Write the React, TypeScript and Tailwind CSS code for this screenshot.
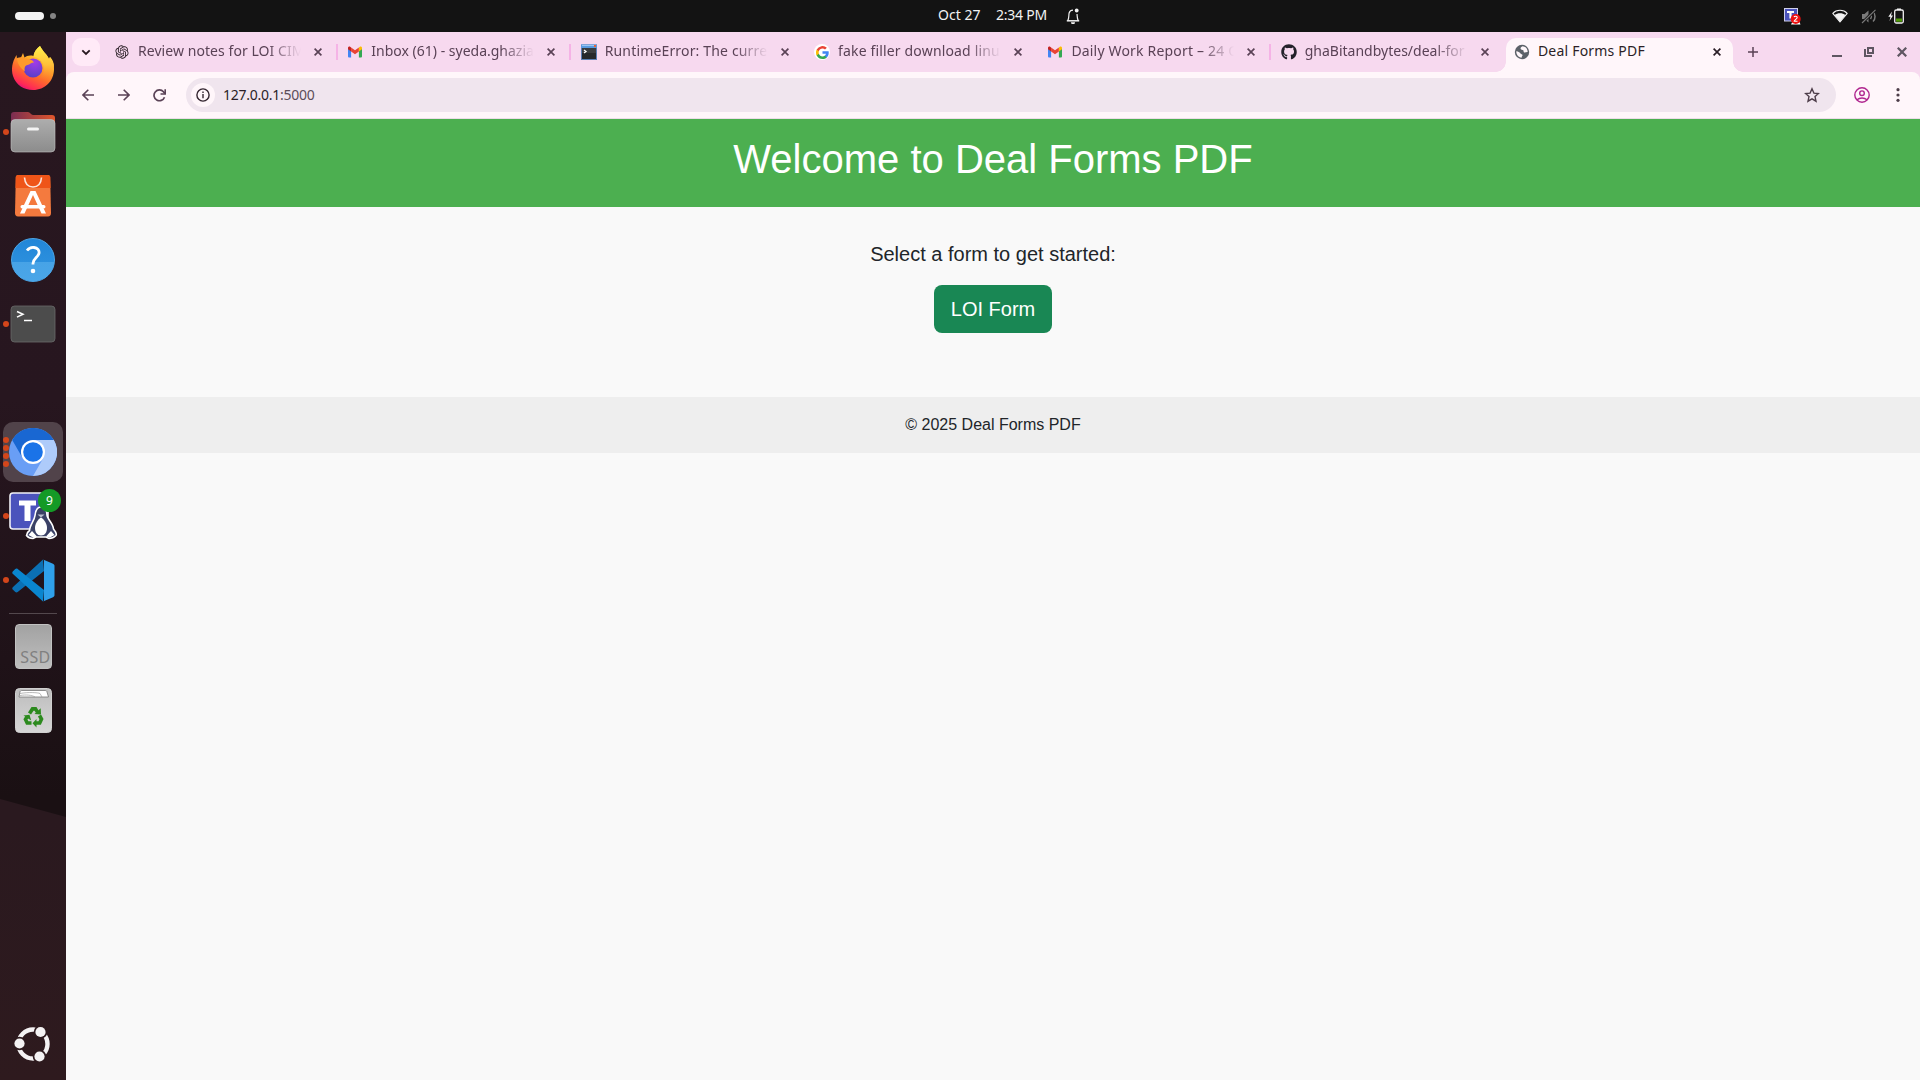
import React from "react";
import { RiOpenaiFill } from "react-icons/ri";
import { FaGithub } from "react-icons/fa";

const GmailIcon = () => (
  <svg width="16" height="16" viewBox="0 0 16 16">
    <path d="M1 4v8.6c0 .6.4.9 1 .9h2.1V6.3z" fill="#4285f4" />
    <path d="M15 4v8.6c0 .6-.4.9-1 .9h-2.1V6.3z" fill="#34a853" />
    <path d="M4.1 3.4v4L8 10.3l3.9-2.9v-4L8 6.3z" fill="#ea4335" />
    <path d="M1 4v1.3l3.1 2.2V3.4l-.7-.5C2.300 2.100 1 2.900 1 4z" fill="#c5221f" />
    <path d="M15 4v1.3l-3.1 2.200V3.4l.7-.5C13.700 2.100 15 2.900 15 4z" fill="#fbbc04" />
  </svg>
);

const GoogleIcon = () => (
  <span className="flex size-4 items-center justify-center rounded-full bg-white">
    <svg width="13" height="13" viewBox="0 0 24 24">
      <path fill="#4285f4" d="M23.500 12.270c0-.85-.08-1.670-.22-2.450H12v4.640h6.450a5.500 5.500 0 0 1-2.390 3.620v3h3.870c2.260-2.090 3.570-5.160 3.570-8.810z" />
      <path fill="#34a853" d="M12 24c3.240 0 5.950-1.070 7.930-2.910l-3.870-3c-1.070.72-2.440 1.140-4.060 1.140-3.120 0-5.770-2.110-6.710-4.950h-4v3.090A12 12 0 0 0 12 24z" />
      <path fill="#fbbc05" d="M5.290 14.280a7.200 7.200 0 0 1 0-4.570V6.620h-4a12 12 0 0 0 0 10.760z" />
      <path fill="#ea4335" d="M12 4.770c1.760 0 3.340.61 4.590 1.800l3.430-3.430A12 12 0 0 0 1.290 6.620l4 3.100C6.230 6.870 8.880 4.770 12 4.770z" />
    </svg>
  </span>
);

const ConsoleIcon = () => (
  <svg width="16" height="16" viewBox="0 0 16 16">
    <rect x="0.500" y="1" width="15" height="14.500" fill="#26292c" stroke="#5b7fb5" />
    <rect x="0" y="0.500" width="16" height="3.500" fill="#5a9be0" />
    <rect x="1" y="1" width="12" height="1" fill="#9cc8f2" />
    <rect x="13" y="1" width="2" height="2" fill="#e8623a" />
    <rect x="1" y="4" width="14" height="5" fill="#3a3d40" />
    <path d="M3 6l2 1.500L3 9" fill="none" stroke="#fff" strokeWidth="1.300" />
  </svg>
);

const GlobeIcon = () => (
  <svg width="16" height="16" viewBox="0 0 16 16">
    <circle cx="8" cy="8" r="7.200" fill="#5c6168" />
    <path d="M8.500 2.300C7 3 6.300 3.800 6.700 4.900c.4 1 1.800.7 2.500 1.300.8.700 0 1.800 1 2.300 1 .4 2-.5 3.500-.4C13.600 5 11.800 2.600 8.500 2.300zM2.300 7.300c-.2 3 2 6 5.400 6.400-.3-1.200.9-1.600.8-2.600-.1-.9-1.500-.7-2-1.500-.5-1-2-2-4.200-2.300z" fill="#fff6fa" />
  </svg>
);

const tabs = [
  { title: "Review notes for LOI CIM", icon: <RiOpenaiFill size={16} color="#2b2027" />, sep: true, fit: "tracking-[0.06px]" },
  { title: "Inbox (61) - syeda.ghazia", icon: <GmailIcon />, sep: true, fit: "tracking-[0px]" },
  { title: "RuntimeError: The curre", icon: <ConsoleIcon />, sep: false, fit: "tracking-[0.160px]" },
  { title: "fake filler download linu", icon: <GoogleIcon />, sep: false, fit: "tracking-[0.160px]" },
  { title: "Daily Work Report – 24 O", icon: <GmailIcon />, sep: true, fit: "tracking-[0.180px]" },
  { title: "ghaBitandbytes/deal-for", icon: <FaGithub size={16} color="#24222b" />, sep: false, fit: "tracking-[0px]" },
];

const Cross = ({ color, size = 8, w = 1.7 }: { color: string; size?: number; w?: number }) => (
  <svg width={size} height={size} viewBox="0 0 8 8">
    <path d="M.6.6l6.800 6.800M7.400.6L.6 7.400" stroke={color} strokeWidth={w} />
  </svg>
);

const FirefoxIcon = () => (
  <svg width="44" height="46" viewBox="0 0 44 46">
    <defs>
      <linearGradient id="ffa" x1="0.800" y1="0" x2="0.300" y2="1">
        <stop offset="0" stopColor="#fff04a" />
        <stop offset="0.350" stopColor="#ffb52a" />
        <stop offset="0.650" stopColor="#ff6a2c" />
        <stop offset="0.900" stopColor="#ff2a55" />
        <stop offset="1" stopColor="#e3107c" />
      </linearGradient>
      <radialGradient id="ffb" cx="0.600" cy="0.200" r="0.800">
        <stop offset="0" stopColor="#a23be8" />
        <stop offset="1" stopColor="#5a3fc9" />
      </radialGradient>
      <linearGradient id="ffc" x2="0" y2="1">
        <stop offset="0" stopColor="#fff04a" />
        <stop offset="0.550" stopColor="#ffc03a" />
        <stop offset="1" stopColor="#ff7a2c" stopOpacity="0" />
      </linearGradient>
    </defs>
    <path d="M5.500 10C1 17 0 24 2 31c3 9 11 14 20 14 12 0 21-9 21-21 0-5-1.500-9-4-12l-1 2C36 9 32 7 29 1c-4 3-6 6.500-6.500 10-4-1-7 0-9 1.500L12 8l-2 4.500L6 14z" fill="url(#ffa)" />
    <circle cx="22" cy="23" r="9.500" fill="url(#ffb)" />
    <path d="M6 13c3-1 6-1 8.500.5 3 0 7 1 8.500 4-3 0-4 2-6.500 2.500-2.500.5-3.500 3-2.500 6.500C9 23 6 18 6 13z" fill="#ff9a2b" />
    <path d="M29 1c-5 4-7 8-6 11 6 1 10 6 10 12 0 6-4 10-9 11 10 1 18-4 19-13 0-4-1-7-4-10l-1 2C36 9 32 7 29 1z" fill="url(#ffc)" />
  </svg>
);

const FilesIcon = () => (
  <svg width="46" height="44" viewBox="0 0 46 44">
    <defs>
      <linearGradient id="fla"><stop offset="0" stopColor="#7a2d52" /><stop offset="1" stopColor="#e0562b" /></linearGradient>
      <linearGradient id="flb" x2="0" y2="1"><stop offset="0" stopColor="#adadad" /><stop offset="1" stopColor="#8c8c8c" /></linearGradient>
    </defs>
    <path d="M1 5a3 3 0 0 1 3-3h14c2 0 3 3 5 3h19a3 3 0 0 1 3 3v12H1z" fill="url(#fla)" />
    <rect x="1" y="9.500" width="44" height="32.500" rx="4" fill="url(#flb)" stroke="#c4c4c4" strokeWidth="0.600" />
    <rect x="17" y="17.500" width="12" height="3" rx="1.500" fill="#f4f4f4" />
  </svg>
);

const SoftwareIcon = () => (
  <svg width="38" height="44" viewBox="0 0 38 44">
    <path d="M4 1h30c1.500 0 2 1 2.200 2L37 39c0 2-1 3.500-3 3.500H4c-2 0-3-1.500-3-3.500L1.800 3C2 2 2.500 1 4 1z" fill="#f47a3e" />
    <path d="M4 1h30c1.500 0 2 1 2.200 2l.4 11H1.500L1.800 3C2 2 2.500 1 4 1z" fill="#ef5518" />
    <path d="M10.500 3.500C11 10 14 13 19 13s8-3 8.500-9.500" fill="none" stroke="#fbe6dc" strokeWidth="1.600" />
    <path d="M16.500 17h5L32 39.500h-4.500L19 21l-8.500 18.500H6z" fill="#fff" />
    <rect x="6.500" y="31" width="25" height="3.500" rx="1.700" fill="#fff" />
  </svg>
);

const HelpIcon = () => (
  <div className="flex size-[44px] items-center justify-center rounded-full border border-[#4ba6e8] bg-[linear-gradient(180deg,#2286d8_0%,#2b8fdd_54%,#47a3e6_54%,#4aa6e8_100%)]">
    <svg width="18" height="30" viewBox="0 0 18 30">
      <path d="M3 5.500C5 3 7.500 2.200 10 2.500c3.500.4 5.500 2.700 5 5.700-.7 4-6 5.300-6 10.300v1" fill="none" stroke="#fff" strokeWidth="2.800" />
      <circle cx="9" cy="26" r="2.300" fill="#fff" />
    </svg>
  </div>
);

const TerminalIcon = () => (
  <svg width="46" height="38" viewBox="0 0 46 38">
    <rect x="1" y="1" width="44" height="36" rx="3.500" fill="#4c4c4c" stroke="#6a6a6a" strokeWidth="0.800" />
    <path d="M7 6.500l6 2.800-6 2.800" fill="none" stroke="#fff" strokeWidth="1.500" />
    <path d="M14 15.500h8" stroke="#fff" strokeWidth="1.500" />
  </svg>
);

const ChromiumIcon = () => (
  <svg width="48" height="48" viewBox="0 0 48 48">
    <circle cx="24" cy="24" r="24" fill="#699ef5" />
    <path d="M3.200 12A24 24 0 0 1 44.800 12L24 12 13.600 30z" fill="#1967d2" />
    <path d="M44.800 12A24 24 0 0 1 24 48L34.400 30 34.400 18 24 12z" fill="#aecbfa" />
    <circle cx="24" cy="24" r="12" fill="#fff" />
    <circle cx="24" cy="24" r="9.800" fill="#1a73e8" />
  </svg>
);

const TeamsIcon = () => (
  <div className="relative h-[50px] w-[50px]">
    <svg width="50" height="50" viewBox="0 0 50 50">
      <rect x="2" y="2" width="38" height="36" rx="3" fill="#4b53bc" stroke="#f1f1f6" strokeWidth="1.600" />
      <path d="M11 9.500h17v5h-5.500V30h-6V14.500H11z" fill="#fff" />
      <path d="M33 16c5 0 6 4 6 8 0 4 6 8 6.500 14 2.500 3 3.500 5 2.500 6.500-2 2-5 3-7 3l-3-1.500H28l-3 1.500c-3 0-5-1-6.500-3 0-2 1-3.500 3-5 0-5 5-10 5.500-15 .5-5 2-8.500 6-8.500z" fill="#3a4166" stroke="#fff" strokeWidth="1.600" />
      <path d="M33 26.500c3 2 6 6 6 10.500 0 4-2 7.500-6 7.500s-6-3.500-6-7.500c0-4.500 3-8.500 6-10.500z" fill="#fff" />
      <path d="M20.500 44l3.500-4 5 5.500-3.500 1.200zM46.500 44L43 40l-5 5.500 3.500 1.200z" fill="#fff" />
      <path d="M29.500 23.500h7l-3.500 3z" fill="#b9bccd" />
    </svg>
    <span className="absolute -top-[2px] left-[30px] flex size-[23px] items-center justify-center rounded-full bg-[#149a26] font-['Noto_Sans',sans-serif] text-[12px] text-white">9</span>
  </div>
);

const CodeIcon = () => (
  <svg width="43" height="43" viewBox="0 0 43 43">
    <path d="M31 .5L1 28c-1 .8-1 2 0 2.800l2.300 2.200c.7.600 1.600.7 2.400.1L32 12z" fill="#0b70b4" />
    <path d="M31 42.500L1 15c-1-.8-1-2 0-2.800l2.300-2.200c.7-.6 1.600-.7 2.400-.1L32 31z" fill="#0a86cf" />
    <path d="M31 .5l10 4.300c1 .5 1.500 1.200 1.500 2.200v29c0 1-.5 1.700-1.500 2.200l-10 4.300c1-.5 1-1 1-2V2.500c0-1 0-1.500-1-2z" fill="#2fa0ea" />
  </svg>
);

const SsdIcon = () => (
  <div className="relative -top-px flex h-[45px] w-[37px] items-end justify-end overflow-hidden rounded-[4px] border border-[#c2c2c2] bg-[linear-gradient(180deg,#a2a2a2,#bebebe)]">
    <span className="font-['Noto_Sans',sans-serif] text-[16px] leading-[21px] tracking-[0.300px] text-[#808080]">SSD</span>
  </div>
);

const TrashIcon = () => (
  <svg className="relative -top-px" width="37" height="45" viewBox="0 0 37 45">
    <defs><linearGradient id="tr" x2="0" y2="1"><stop offset="0" stopColor="#bdbdbd" /><stop offset="1" stopColor="#d6d6d6" /></linearGradient></defs>
    <rect x="0.500" y="0.500" width="36" height="44" rx="4" fill="url(#tr)" stroke="#d0d0d0" />
    <path d="M4 9l1-5c0-1 1-1.500 2-1.500h23c1 0 2 .5 2 1.500l1.500 5z" fill="#fff" stroke="#777" strokeWidth="0.800" />
    <path d="M5 5.500c8-1.500 18-1 20 0l2 3.500M5 7.500c6-1 12-.5 15 1.500" fill="none" stroke="#999" strokeWidth="0.700" />
    <g fill="none" stroke="#2c8a1e" strokeWidth="3.600">
      <path d="M14.500 25.500l3-4.600h3l2 3.200" />
      <path d="M24.500 27.500l2 3.500-1.800 4h-4.200" />
      <path d="M16.500 35h-4.300l-1.700-3.600 1.600-2.600" />
    </g>
    <path d="M19.500 26l6.500.5-.3-6.200zM21.500 39.500v-8.500l-4 4.200zM8.500 27.500l6-.8 1.700 5.800z" fill="#2c8a1e" />
  </svg>
);

const UbuntuIcon = () => (
  <svg width="38" height="38" viewBox="0 0 38 38">
    <circle cx="19" cy="19" r="14.500" fill="none" stroke="#f4f2f3" strokeWidth="4.400" />
    {[[5.500, 18.500], [26.500, 7], [25.500, 31.500]].map(([x, y]) => (
      <g key={x}>
        <circle cx={x} cy={y} r="6.800" fill="#2d1a1e" />
        <circle cx={x} cy={y} r="5.100" fill="#f4f2f3" />
      </g>
    ))}
  </svg>
);

const Slot = ({ children, dots = 0, active = false }: { children?: React.ReactNode; dots?: number; active?: boolean }) => (
  <div className="relative flex h-16 w-full items-center justify-center">
    <div className={active ? "flex size-[60px] items-center justify-center rounded-[10px] bg-[#51434a]" : "flex items-center justify-center"}>{children}</div>
    <div className="absolute inset-y-0 left-[3px] flex flex-col justify-center gap-[2.300px]">
      {Array.from({ length: dots }, (_, i) => (
        <span key={i} className="size-[6px] rounded-full bg-[#d3461b]" />
      ))}
    </div>
  </div>
);

const Dock = () => (
  <aside className="relative flex w-[66px] shrink-0 flex-col items-center bg-[linear-gradient(180deg,#28171f_0%,#27161f_35%,#1f1218_60%,#1a1013_73%)] pt-1">
    <div className="absolute inset-0 bg-[linear-gradient(180deg,#2a191f_75%,#2e1a1e_100%)] [clip-path:polygon(0_767px,100%_785px,100%_100%,0_100%)]" />
    <Slot><FirefoxIcon /></Slot>
    <Slot dots={1}><FilesIcon /></Slot>
    <Slot><SoftwareIcon /></Slot>
    <Slot><HelpIcon /></Slot>
    <Slot dots={1}><TerminalIcon /></Slot>
    <Slot />
    <Slot dots={4} active><ChromiumIcon /></Slot>
    <Slot dots={1}><TeamsIcon /></Slot>
    <Slot dots={1}><CodeIcon /></Slot>
    <div className="flex h-[3px] items-center"><div className="h-px w-12 bg-[#53484d]" /></div>
    <Slot><SsdIcon /></Slot>
    <Slot><TrashIcon /></Slot>
    <div className="relative mt-auto mb-[17px]"><UbuntuIcon /></div>
  </aside>
);

const TopBar = () => (
  <header className="grid h-8 shrink-0 grid-cols-[1fr_auto_1fr] items-center bg-[#131313] font-['Noto_Sans',sans-serif] text-[14px] text-[#f2f2f2]">
    <div className="flex items-center gap-[6px] pl-[15px]">
      <span className="h-2 w-[29px] rounded-full bg-[#f4f4f4]" />
      <span className="size-[6px] rounded-full bg-[#848484]" />
    </div>
    <div className="flex translate-x-[49px] items-center">
      <span className="w-[58px] pb-[2px] leading-5 whitespace-nowrap tracking-[0.050px]">Oct 27</span>
      <span className="w-[70px] pb-[2px] leading-5 whitespace-nowrap tracking-[-0.250px]">2:34 PM</span>
      <svg width="14" height="16" viewBox="0 0 14 16" fill="none" stroke="#f2f2f2" strokeWidth="1.200">
        <path d="M1.800 12.500C3.300 10 2.500 7 3.200 4.800 3.800 3 5 2.200 7 2.200M12.200 12.500C11 10.500 11.300 8 11 6" />
        <path d="M.8 12.800h12.400" strokeWidth="1.500" />
        <circle cx="10.700" cy="2.500" r="1.900" fill="#f2f2f2" stroke="none" />
        <path d="M5 14.200h4a2 2 0 0 1-4 0z" fill="#f2f2f2" stroke="none" />
      </svg>
    </div>
    <div className="flex items-center justify-end pr-4">
      <svg className="mr-[31px]" width="17" height="17" viewBox="0 0 17 17">
        <rect x="0.500" y="0.500" width="13" height="12.500" fill="#4b53bc" stroke="#cfd0ea" />
        <path d="M3 3h7v2H7.600v5.500H5.400V5H3z" fill="#fff" />
        <path d="M7 16.500l2-4 6 .5 1.500 3.500z" fill="#fff" />
        <circle cx="11.700" cy="11" r="5" fill="#ef1111" />
        <path d="M10 9.200c.4-1.400 3.200-1.400 3.200.3 0 1.500-3 2.200-3 3.800h3.300" fill="none" stroke="#fff" strokeWidth="1.100" />
      </svg>
      <svg className="mr-[13px]" width="16" height="14" viewBox="0 0 16 14">
        <path d="M.8 4.300C4.500.3 11.500.3 15.200 4.300L8 13z" fill="none" stroke="#f2f2f2" strokeWidth="1.100" strokeLinejoin="round" />
        <path d="M2.600 6c3-2.400 7.800-2.400 10.800 0L8 13z" fill="#f2f2f2" />
      </svg>
      <svg className="mr-[11px]" width="16" height="15" viewBox="0 0 16 15" fill="none" stroke="#7a7a7a" strokeWidth="1.500">
        <path d="M1 5h2.500L7.500 1.500v12L3.500 10H1z" fill="#7a7a7a" stroke="none" />
        <path d="M9.500 5c1 1.500 1 3.500 0 5M12 2.500c2.700 2.500 2.700 7.500 0 10" />
        <path d="M1 14L14.500.8" stroke="#131313" strokeWidth="3" />
        <path d="M1 14L14.500.8" strokeWidth="1.100" />
      </svg>
      <svg width="16" height="16" viewBox="0 0 16 16">
        <path d="M4 3.500L.3 8.800h2.200L1.500 13 5 7.500H3z" fill="#f2f2f2" />
        <rect x="6.700" y="2" width="8.600" height="13" rx="1.500" fill="none" stroke="#f2f2f2" strokeWidth="1.300" />
        <rect x="9" y="0.500" width="4" height="1.500" fill="#f2f2f2" />
        <rect x="8" y="10.500" width="6" height="3.200" fill="#4e9a06" />
      </svg>
    </div>
  </header>
);

const TabStrip = () => (
  <div className="flex h-10 shrink-0 items-center bg-[#f7d9ef] pl-[6px] font-['Noto_Sans',sans-serif] text-[14px] text-[#5a4256]">
    <button className="mr-[3.500px] flex size-7 shrink-0 items-center justify-center rounded-[9px] bg-[#ffeaf7]">
      <svg width="10" height="7" viewBox="0 0 10 7"><path d="M1.300 1.300L5 5l3.700-3.700" fill="none" stroke="#27181f" strokeWidth="1.800" /></svg>
    </button>
    {tabs.map((t) => (
      <div key={t.title} className="relative flex h-full w-[233.350px] shrink-0 items-center pl-[10.500px]">
        {t.icon}
        <div className={`ml-2 w-[164px] overflow-hidden pb-[2px] leading-5 whitespace-nowrap [mask-image:linear-gradient(90deg,#000_130px,transparent_163px)] ${t.fit}`}>{t.title}</div>
        <div className="ml-[12px] flex"><Cross color="#5a4256" /></div>
        {t.sep && <span className="absolute top-3 right-[-1px] h-4 w-[2px] bg-[#f5b3e6]" />}
      </div>
    ))}
    <div className="relative ml-[2.400px] flex h-[34px] w-[227px] shrink-0 items-center self-end rounded-t-[10px] bg-[#fff6fa] pb-[6px] pl-2">
      <span className="absolute bottom-0 left-[-10px] size-[10px] bg-[radial-gradient(circle_at_0_0,transparent_9.500px,#fff6fa_10px)]" />
      <span className="absolute right-[-10px] bottom-0 size-[10px] bg-[radial-gradient(circle_at_100%_0,transparent_9.500px,#fff6fa_10px)]" />
      <GlobeIcon />
      <div className="ml-2 w-[169px] pb-[2px] leading-5 tracking-[0.200px] text-[#2b1f27]">Deal Forms PDF</div>
      <div className="ml-[6px] flex"><Cross color="#2b1f27" /></div>
    </div>
    <svg className="ml-[15px] shrink-0" width="10" height="10" viewBox="0 0 10 10"><path d="M5 0v10M0 5h10" stroke="#5a4256" strokeWidth="1.500" /></svg>
    <div className="ml-auto flex items-center pr-[13px]">
      <svg width="10" height="10" viewBox="0 0 10 10"><path d="M0 9h10" stroke="#5f5662" strokeWidth="2" /></svg>
      <svg className="ml-[22px]" width="10" height="10" viewBox="0 0 10 10" fill="none" stroke="#5f5662" strokeWidth="2"><path d="M4 1h5v5H4z" /><path d="M1 2v7h7" /></svg>
      <span className="ml-[23px] flex"><Cross color="#5f5662" size={10} w={1.800} /></span>
    </div>
  </div>
);

const Toolbar = () => (
  <div className="h-[47px] shrink-0 bg-[#f7d9ef]">
    <div className="flex h-full items-center rounded-t-[8px] border-b border-[#ecdde8] bg-[#fff6fa] pl-4">
      <svg width="12" height="12" viewBox="0 0 12 12" fill="none" stroke="#5a4256" strokeWidth="1.600"><path d="M12 6H1M6.300.7L1 6l5.300 5.300" /></svg>
      <svg className="ml-6" width="12" height="12" viewBox="0 0 12 12" fill="none" stroke="#5a4256" strokeWidth="1.600"><path d="M0 6h11M5.700.7L11 6l-5.300 5.300" /></svg>
      <svg className="ml-[23px]" width="13" height="13" viewBox="0 0 13 13" fill="none" stroke="#5a4256" strokeWidth="1.700"><path d="M11.500 8.200A5.400 5.400 0 1 1 10.500 2.800L12 4.300" /><path d="M12.200.2V5H7.500" strokeWidth="1.600" /></svg>
      <div className="ml-5 flex h-[34px] w-[1650px] items-center rounded-full bg-[#f0e5ee] pr-4 pl-[5px]">
        <span className="flex size-6 items-center justify-center rounded-full bg-[#fff6fa]">
          <svg width="14" height="14" viewBox="0 0 14 14"><circle cx="7" cy="7" r="6.100" fill="none" stroke="#33252f" strokeWidth="1.400" /><path d="M7 6v4.300M7 3.600v1.500" stroke="#33252f" strokeWidth="1.400" /></svg>
        </span>
        <span className="ml-2 pb-px font-['Noto_Sans',sans-serif] text-[14px] leading-5 tracking-[-0.260px] text-[#2b1f27]">127.0.0.1<span className="text-[#5c4d59]">:5000</span></span>
        <svg className="ml-auto" width="16" height="16" viewBox="0 0 16 16"><path d="M8 1.800l1.900 4.300 4.600.4-3.500 3.100 1 4.600L8 11.800l-4 2.400 1-4.600-3.500-3.100 4.600-.4z" fill="none" stroke="#4d3d49" strokeWidth="1.400" /></svg>
      </div>
      <svg className="ml-[18px]" width="16" height="16" viewBox="0 0 16 16" fill="none" stroke="#b0268f" strokeWidth="1.400"><circle cx="8" cy="8" r="7.200" /><circle cx="8" cy="6.200" r="2.300" /><path d="M3 12.800c2.800-2.500 7.200-2.500 10 0" /></svg>
      <svg className="ml-[26px]" width="4" height="14" viewBox="0 0 4 14" fill="#4d3d49"><circle cx="2" cy="1.700" r="1.600" /><circle cx="2" cy="7" r="1.600" /><circle cx="2" cy="12.300" r="1.600" /></svg>
    </div>
  </div>
);

export default function App() {
  return (
    <div className="flex h-[1080px] w-[1920px] flex-col overflow-hidden">
      <TopBar />
      <div className="flex min-h-0 flex-1">
        <Dock />
        <div className="flex min-w-0 flex-1 flex-col">
          <TabStrip />
          <Toolbar />
          <main className="flex-1 bg-[#f9f9f9] text-center font-['Liberation_Sans',Arial,sans-serif] text-[#212529]">
            <div className="h-[88px] bg-[#4caf50] pt-4"><h1 className="text-[40px] leading-[48px] text-white">Welcome to Deal Forms PDF</h1></div>
            <div className="flex h-[190px] flex-col items-center pt-8">
              <p className="mb-4 text-[20px] leading-[30px]">Select a form to get started:</p>
              <a className="flex h-12 w-[118px] items-center justify-center rounded-[8px] bg-[#198754] text-[20px] text-white">LOI Form</a>
            </div>
            <footer className="h-14 bg-[#eee] pt-4 text-[16px] leading-6">© 2025 Deal Forms PDF</footer>
          </main>
        </div>
      </div>
    </div>
  );
}
